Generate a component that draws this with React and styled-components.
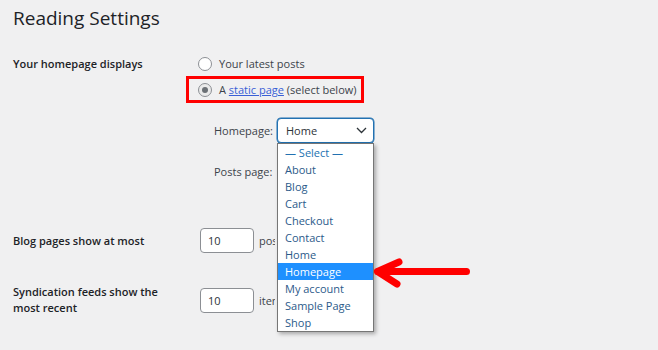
import React from 'react'
import styled, { createGlobalStyle } from 'styled-components'

const GlobalStyles = createGlobalStyle`
  html, body {
    margin:0;
    padding:0;
    background:#f0f0f1;
  }
  body {
    font-family:'Open Sans', 'Noto Sans', sans-serif;
    font-size:11px;
    color:#3c434a;
  }
`;

const Page = styled.div`
  position:relative;
  width:658px;
  height:350px;
  overflow:hidden;
  box-sizing:border-box;
  padding:6px 0 0 13px;
`;

const Title = styled.h1`
  margin:0;
  font-size:19px;
  font-weight:400;
  line-height:25px;
  color:#1d2327;
`;

const Row = styled.div`
  display:grid;
  grid-template-columns:185px 1fr;
  align-items:${p => (p.$center ? 'center' : 'start')};
  margin-top:${p => p.$top}px;
`;

const Label = styled.div`
  font-weight:600;
  line-height:16px;
  color:#1d2327;
  max-width:160px;
`;

const Choices = styled.div`
  display:flex;
  flex-direction:column;
  align-items:flex-start;
  gap:10px;
`;

const Choice = styled.label`
  display:flex;
  align-items:center;
  gap:7px;
  line-height:16px;
  color:#3c434a;
  white-space:nowrap;
`;

const Highlight = styled.div`
  border:3px solid #ff0000;
  padding:3px 4px 2px 9px;
  margin:-6px 0 -5px -12px;
`;

const Radio = styled.span`
  width:12px;
  height:12px;
  border:1px solid #8c8f94;
  border-radius:50%;
  background:${p => (p.$checked ? '#eaeaea' : '#fff')};
  display:flex;
  align-items:center;
  justify-content:center;
  &::after {
    content:'';
    display:${p => (p.$checked ? 'block' : 'none')};
    width:6px;
    height:6px;
    border-radius:50%;
    background:#6b7075;
  }
`;

const Link = styled.a`
  color:#3a5fd6;
  text-decoration:underline;
`;

const PageSelects = styled.div`
  display:flex;
  flex-direction:column;
  gap:16px;
  margin-top:20px;
  padding-left:16px;
`;

const SelectRow = styled.div`
  display:flex;
  align-items:center;
`;

const SelectLabel = styled.span`
  width:63px;
  color:#3c434a;
`;

const SelectWrap = styled.div`
  position:relative;
`;

const SelectBox = styled.div`
  box-sizing:border-box;
  width:97px;
  height:25px;
  display:flex;
  align-items:center;
  justify-content:space-between;
  padding:0 6px 0 8px;
  border:1px solid ${p => (p.$focus ? '#2271b1' : '#8c8f94')};
  box-shadow:${p => (p.$focus ? '0 0 0 0.5px #2271b1' : 'none')};
  border-radius:4px;
  background:#fff;
  color:#2c3338;
`;

const Dropdown = styled.ul`
  position:absolute;
  top:25px;
  left:0;
  z-index:2;
  box-sizing:border-box;
  width:97px;
  margin:0;
  padding:0;
  list-style:none;
  background:#fff;
  border:1px solid #767676;
  box-shadow:2px 2px 4px rgba(0,0,0,0.3);
`;

const Option = styled.li`
  height:17px;
  line-height:17px;
  padding-left:7px;
  white-space:nowrap;
  color:${p => (p.$active ? '#fff' : p.$muted ? '#2271b1' : '#2b5a8a')};
  background:${p => (p.$active ? '#1e90ff' : 'transparent')};
`;

/* the open list covers the rest of the field, so it is clipped at the list's edge */
const Field = styled.div`
  display:flex;
  align-items:center;
  gap:5px;
  width:77px;
  overflow:hidden;
  white-space:nowrap;
`;

const NumberInput = styled.div`
  flex:none;
  box-sizing:border-box;
  width:54px;
  height:25px;
  margin-left:2px;
  display:flex;
  align-items:center;
  padding-left:7px;
  border:1px solid #8c8f94;
  border-radius:4px;
  background:#fff;
  color:#2c3338;
`;

const Arrow = styled.svg`
  position:absolute;
  left:370px;
  top:252px;
  z-index:3;
`;

const Chevron = () => (
  <svg width="11" height="7" viewBox="0 0 11 7">
    <path d="M1 1l4.5 4.5L10 1" fill="none" stroke="#2c3338" strokeWidth="1.3" />
  </svg>
);

const pages = ['— Select —', 'About', 'Blog', 'Cart', 'Checkout', 'Contact', 'Home', 'Homepage', 'My account', 'Sample Page', 'Shop'];

export default function App() {
  return (
    <Page>
      <GlobalStyles />
      <Title>Reading Settings</Title>

      <Row $top={25}>
        <Label>Your homepage displays</Label>
        <div>
          <Choices>
            <Choice><Radio /><span>Your latest posts</span></Choice>
            <Highlight>
              <Choice><Radio $checked /><span>A <Link href="#">static page</Link> (select below)</span></Choice>
            </Highlight>
          </Choices>
          <PageSelects>
            <SelectRow>
              <SelectLabel>Homepage:</SelectLabel>
              <SelectWrap>
                <SelectBox $focus>Home<Chevron /></SelectBox>
                <Dropdown>
                  {pages.map((p, i) => (
                    <Option key={p} $muted={i === 0} $active={p === 'Homepage'}>{p}</Option>
                  ))}
                </Dropdown>
              </SelectWrap>
            </SelectRow>
            <SelectRow>
              <SelectLabel>Posts page:</SelectLabel>
              <SelectWrap>
                <SelectBox />
              </SelectWrap>
            </SelectRow>
          </PageSelects>
        </div>
      </Row>

      <Row $top={44} $center>
        <Label>Blog pages show at most</Label>
        <Field><NumberInput>10</NumberInput>posts per page</Field>
      </Row>

      <Row $top={31} $center>
        <Label>Syndication feeds show the most recent</Label>
        <Field><NumberInput>10</NumberInput>items</Field>
      </Row>

      <Arrow width="106" height="40" viewBox="0 0 106 40">
        <path d="M7.5 19.5H96.5M7.5 19.5L29 10M7.5 19.5L27 32" fill="none" stroke="#ff0000" strokeWidth="7" strokeLinecap="round" strokeLinejoin="round" />
      </Arrow>
    </Page>
  );
}
